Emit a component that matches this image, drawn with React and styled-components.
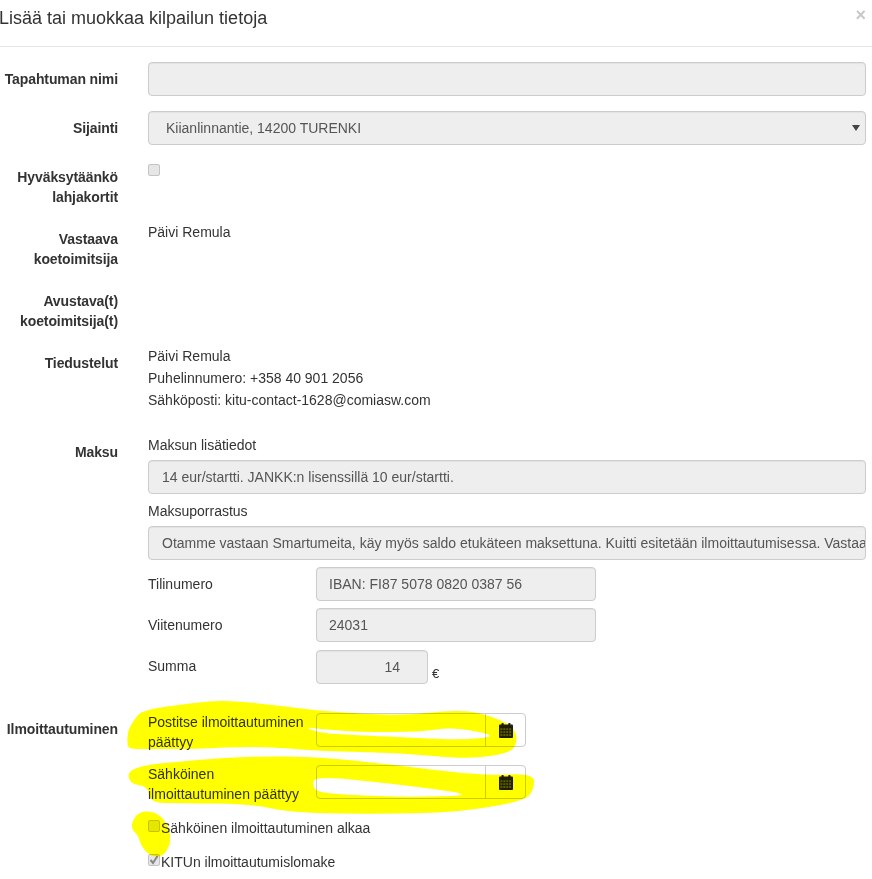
import React from "react";
import styled, { createGlobalStyle } from "styled-components";

const GlobalStyle = createGlobalStyle`
  html, body {
    margin: 0;
    padding: 0;
    background: #fff;
    height: 879px;
    overflow: hidden;
  }
  body {
    font-family: "Liberation Sans", Arial, sans-serif;
    font-size: 14px;
    line-height: 20px;
    color: #333;
  }
`;

const Modal = styled.div`
  position: relative;
  width: 872px;
  height: 879px;
  overflow: hidden;
`;

const Header = styled.div`
  height: 47px;
  box-sizing: border-box;
  border-bottom: 1px solid #e5e5e5;
  display: flex;
  justify-content: space-between;
  padding: 8px 6px 0 0;
  margin-bottom: 15px;
`;

const Title = styled.h4`
  margin: 0 0 0 -1px;
  font-size: 18px;
  font-weight: 400;
  line-height: 20px;
`;

const Close = styled.span`
  font-size: 18px;
  font-weight: 700;
  line-height: 14px;
  color: #c8c8c8;
`;

const Row = styled.div`
  display: grid;
  grid-template-columns: 118px 718px;
  column-gap: 30px;
  margin-bottom: ${(p) => p.$mb ?? 15}px;
`;

const Label = styled.label`
  text-align: right;
  font-weight: 700;
  letter-spacing: -0.1px;
  padding-top: ${(p) => p.$pt ?? 7}px;
`;

const Control = styled.div`
  height: 34px;
  box-sizing: border-box;
  background: #eee;
  border: 1px solid #ccc;
  border-radius: 4px;
  box-shadow: inset 0 1px 1px rgba(0, 0, 0, 0.05);
  color: #555;
  padding: 6px ${(p) => p.$pr ?? 12}px 6px ${(p) => p.$pl ?? 12}px;
  white-space: nowrap;
  overflow: hidden;
  width: ${(p) => p.$w || "100%"};
  text-align: ${(p) => p.$align || "left"};
  margin-bottom: ${(p) => p.$mb ?? 0}px;
`;

const SelectControl = styled(Control)`
  position: relative;
  &::after {
    content: "";
    position: absolute;
    right: 5px;
    top: 13px;
    border-left: 4px solid transparent;
    border-right: 4px solid transparent;
    border-top: 6px solid #444;
  }
`;

const Box = styled.span`
  display: inline-flex;
  align-items: center;
  justify-content: center;
  flex: none;
  width: 12px;
  height: 12px;
  box-sizing: border-box;
  background: #e6e6e6;
  border: 1px solid #c4c4c4;
  border-radius: 2px;
`;

const BoxSlot = styled.div`
  display: flex;
  padding-top: ${(p) => p.$pt ?? 2}px;
`;

const PlainText = styled.div`
  margin-top: ${(p) => p.$mt ?? 0}px;
  line-height: ${(p) => p.$lh ?? 20}px;
`;

const SubLabel = styled.div`
  margin-top: ${(p) => p.$mt ?? 0}px;
  margin-bottom: 5px;
`;

const FieldGrid = styled.div`
  display: grid;
  grid-template-columns: 168px auto;
  justify-content: start;
  align-items: ${(p) => p.$align || "center"};
  margin-bottom: ${(p) => p.$mb ?? 7}px;
`;

const FieldName = styled.span`
  margin-top: ${(p) => p.$mt ?? 0}px;
`;

const Amount = styled.div`
  display: flex;
  align-items: flex-end;
  gap: 4px;
`;

const Euro = styled.span`
  font-size: 13px;
  line-height: 16px;
  padding-bottom: 2px;
`;

const InputGroup = styled.div`
  display: flex;
  width: 210px;
  height: 34px;
  box-sizing: border-box;
  border: 1px solid #ccc;
  border-radius: 4px;
  background: #fff;
`;

const GroupInput = styled.div`
  flex: 1;
`;

const Addon = styled.div`
  width: 39px;
  border-left: 1px solid #ccc;
  display: flex;
  align-items: center;
  justify-content: center;
`;

const CheckRow = styled.div`
  display: flex;
  align-items: flex-start;
  gap: 1px;
  margin-bottom: ${(p) => p.$mb ?? 14}px;
`;

const Highlight = styled.svg`
  position: absolute;
  left: 0;
  top: 0;
  pointer-events: none;
  mix-blend-mode: multiply;
`;

// closed curve through the midpoints of a hand-traced outline
function smooth(points) {
  const mid = (a, b) => [(a[0] + b[0]) / 2, (a[1] + b[1]) / 2];
  const start = mid(points[points.length - 1], points[0]);
  let d = `M${start[0]} ${start[1]}`;
  points.forEach((pt, i) => {
    const m = mid(pt, points[(i + 1) % points.length]);
    d += `Q${pt[0]} ${pt[1]} ${m[0]} ${m[1]}`;
  });
  return d + "Z";
}

const firstStroke = [
  [128, 730], [127, 745], [130, 749], [150, 749], [192, 749], [258, 746], [320, 751],
  [403, 753], [463, 759], [500, 755], [517, 748], [516, 727], [483, 713], [453, 710],
  [400, 716], [320, 711], [275, 705], [225, 700], [192, 703], [142, 710], [134, 720],
];
const firstGap = [
  [304, 727], [320, 729], [360, 732], [420, 732], [453, 727], [500, 736],
  [463, 740], [420, 738], [353, 735], [320, 733],
];
const secondStroke = [
  [128, 767], [129, 784], [148, 786], [150, 803], [182, 803], [252, 804], [292, 813],
  [387, 814], [460, 812], [524, 801], [534, 790], [534, 773], [483, 776], [387, 764],
  [320, 757], [258, 756], [192, 760],
];
const secondGap = [
  [316, 776], [312, 785], [318, 793], [370, 796], [420, 797], [480, 795], [387, 783],
];
const dot = [
  [132, 821], [140, 811], [157, 812], [169, 826], [171, 843], [163, 857], [150, 856],
  [141, 846], [138, 835], [132, 830],
];

function CalendarIcon() {
  const cells = [];
  for (let r = 0; r < 3; r++) {
    for (let c = 0; c < 4; c++) {
      cells.push(<rect key={`${r}-${c}`} x={1.4 + c * 2.9} y={5.2 + r * 2.9} width="2" height="2" fill="#5a5a40" />);
    }
  }
  return (
    <svg width="14" height="15" viewBox="0 0 14 15">
      <rect x="0" y="1.5" width="14" height="13.5" rx="1" fill="#1f1f14" />
      <rect x="2.5" y="0" width="2.2" height="3.5" rx="0.8" fill="#1f1f14" />
      <rect x="9.3" y="0" width="2.2" height="3.5" rx="0.8" fill="#1f1f14" />
      {cells}
    </svg>
  );
}

function DateInput() {
  return (
    <InputGroup>
      <GroupInput />
      <Addon>
        <CalendarIcon />
      </Addon>
    </InputGroup>
  );
}

export default function App() {
  return (
    <Modal>
      <GlobalStyle />
      <Header>
        <Title>Lisää tai muokkaa kilpailun tietoja</Title>
        <Close>×</Close>
      </Header>

      <Row>
        <Label>Tapahtuman nimi</Label>
        <Control />
      </Row>
      <Row>
        <Label>Sijainti</Label>
        <SelectControl $pl={17}>Kiianlinnantie, 14200 TURENKI</SelectControl>
      </Row>
      <Row>
        <Label>
          Hyväksytäänkö
          <br />
          lahjakortit
        </Label>
        <BoxSlot $pt={4}>
          <Box />
        </BoxSlot>
      </Row>
      <Row>
        <Label>
          Vastaava
          <br />
          koetoimitsija
        </Label>
        <PlainText>Päivi Remula</PlainText>
      </Row>
      <Row>
        <Label>
          Avustava(t)
          <br />
          koetoimitsija(t)
        </Label>
        <div />
      </Row>
      <Row $mb={24}>
        <Label>Tiedustelut</Label>
        <PlainText $lh={22} $mt={-1}>
          Päivi Remula
          <br />
          Puhelinnumero: +358 40 901 2056
          <br />
          Sähköposti: kitu-contact-1628@comiasw.com
        </PlainText>
      </Row>
      <Row $mb={29}>
        <Label>Maksu</Label>
        <div>
          <SubLabel>Maksun lisätiedot</SubLabel>
          <Control $pl={13}>14 eur/startti. JANKK:n lisenssillä 10 eur/startti.</Control>
          <SubLabel $mt={7}>Maksuporrastus</SubLabel>
          <Control $pl={13} $mb={7}>
            Otamme vastaan Smartumeita, käy myös saldo etukäteen maksettuna. Kuitti esitetään ilmoittautumisessa. Vastaanotamme myös
          </Control>
          <FieldGrid>
            <FieldName>Tilinumero</FieldName>
            <Control $w="280px">IBAN: FI87 5078 0820 0387 56</Control>
          </FieldGrid>
          <FieldGrid $mb={8}>
            <FieldName>Viitenumero</FieldName>
            <Control $w="280px">24031</Control>
          </FieldGrid>
          <FieldGrid $mb={0}>
            <FieldName $mt={-2}>Summa</FieldName>
            <Amount>
              <Control $w="112px" $align="right" $pr={27}>14</Control>
              <Euro>€</Euro>
            </Amount>
          </FieldGrid>
        </div>
      </Row>
      <Row $mb={0}>
        <Label $pt={6}>Ilmoittautuminen</Label>
        <div>
          <FieldGrid $align="start" $mb={13}>
            <FieldName $mt={-1}>
              Postitse ilmoittautuminen
              <br />
              päättyy
            </FieldName>
            <DateInput />
          </FieldGrid>
          <FieldGrid $align="start" $mb={14}>
            <FieldName $mt={-1}>
              Sähköinen
              <br />
              ilmoittautuminen päättyy
            </FieldName>
            <DateInput />
          </FieldGrid>
          <CheckRow>
            <BoxSlot>
              <Box />
            </BoxSlot>
            <span>Sähköinen ilmoittautuminen alkaa</span>
          </CheckRow>
          <CheckRow $mb={0}>
            <BoxSlot>
              <Box>
                <svg width="10" height="10" viewBox="0 0 10 10">
                  <path d="M1.5 5l2.5 3 4.5-7" fill="none" stroke="#888" strokeWidth="2" />
                </svg>
              </Box>
            </BoxSlot>
            <span>KITUn ilmoittautumislomake</span>
          </CheckRow>
        </div>
      </Row>

      <Highlight width="872" height="879" viewBox="0 0 872 879">
        <path fill="#ffff00" fillRule="evenodd" d={smooth(firstStroke) + smooth(firstGap)} />
        <path fill="#ffff00" fillRule="evenodd" d={smooth(secondStroke) + smooth(secondGap)} />
        <path fill="#ffff00" d={smooth(dot)} />
      </Highlight>
    </Modal>
  );
}
